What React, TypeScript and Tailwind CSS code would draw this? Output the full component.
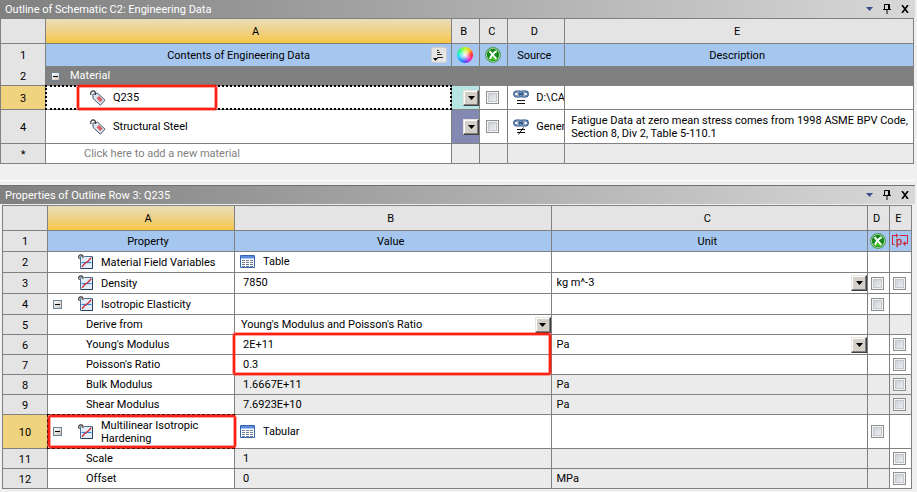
import type { ReactNode } from 'react';
import clsx from 'clsx';

interface PropertyRow {
  name: ReactNode;
  value?: string;
  unit?: string;
  height: string;
  icon?: boolean;
  toggle?: boolean;
  table?: boolean;
  valueSelect?: boolean;
  unitSelect?: boolean;
  // background of the value / unit / D / E cells
  readOnly?: boolean;
  dShaded?: boolean;
  eShaded?: boolean;
  suppress?: boolean;
  parameter?: boolean;
  active?: boolean;
  mark?: 'values' | 'name';
}

const line = 'border-r border-b border-[#808080]';
const redMark = 'pointer-events-none absolute z-10 rounded-[3px] border-2 border-[#fc2015] shadow-[0_0_0_1px_#fc201566,inset_0_0_0_1px_#fc201566]';

const properties: PropertyRow[] = [
  { name: 'Material Field Variables', value: 'Table', height: 'h-[21px]', icon: true, table: true },
  { name: 'Density', value: '7850', unit: 'kg m^-3', height: 'h-[21px]', icon: true, unitSelect: true, suppress: true, parameter: true },
  { name: 'Isotropic Elasticity', height: 'h-[21px]', icon: true, toggle: true, suppress: true },
  { name: 'Derive from', value: "Young's Modulus and Poisson's Ratio", height: 'h-5', valueSelect: true, dShaded: true, eShaded: true },
  { name: "Young's Modulus", value: '2E+11', unit: 'Pa', height: 'h-5', unitSelect: true, parameter: true, mark: 'values' },
  { name: "Poisson's Ratio", value: '0.3', height: 'h-5', parameter: true },
  { name: 'Bulk Modulus', value: '1.6667E+11', unit: 'Pa', height: 'h-5', readOnly: true, dShaded: true, eShaded: true, parameter: true },
  { name: 'Shear Modulus', value: '7.6923E+10', unit: 'Pa', height: 'h-5', readOnly: true, dShaded: true, eShaded: true, parameter: true },
  { name: <>Multilinear Isotropic<br />Hardening</>, value: 'Tabular', height: 'h-[34px]', icon: true, toggle: true, table: true, suppress: true, active: true, mark: 'name' },
  { name: 'Scale', value: '1', height: 'h-5', readOnly: true, dShaded: true, parameter: true },
  { name: 'Offset', value: '0', unit: 'MPa', height: 'h-5', readOnly: true, dShaded: true, parameter: true },
];

function TagIcon() {
  return (
    <svg width="16" height="16" viewBox="0 0 16 16" className="shrink-0" aria-hidden="true">
      <path d="M2.8 4.2 7.6 3.2 15 10.2 10.4 15.2 3.2 8.6Z" fill="#dce6f2" stroke="#43546c" strokeWidth="1" />
      <path d="M6.4 8.2 9 5.8 12.8 9.8 10.2 12.4Z" fill="#e58f95" />
      <path d="M7.2 8.3 9.1 6.6 12 9.7 10.1 11.5Z" fill="#c9303a" />
      <path d="M8 9.4 10.3 7.2M9.2 10.7l2.2-2.2M8 7.2l3.2 3.6" stroke="#f0a9ad" strokeWidth=".5" />
      <path d="M1 5C.2 3.2 1.2.8 3 .8s2.8 1.6 2.4 4" fill="none" stroke="#333" strokeWidth="1.2" />
    </svg>
  );
}

function PropertyIcon() {
  return (
    <svg width="16" height="16" viewBox="0 0 16 16" className="shrink-0" aria-hidden="true">
      <path d="M2.5 2.5h12v12h-12z" fill="#e4edf8" stroke="#4a6a8e" />
      <path d="M14.5 3v11.5H3" fill="none" stroke="#27415f" />
      <path d="M3.5 8.5h10" stroke="#2e8bdc" strokeWidth="1.2" />
      <path d="M4 12.8 6.5 9.8l3.5-2.6 3.2-3.4" fill="none" stroke="#d02a32" strokeWidth="1.3" />
      <path d="M1.5 4.8C0 3 .8.8 2.8.8S5.4 2.2 5 4" fill="none" stroke="#fff" strokeWidth="2.4" />
      <path d="M1.5 4.8C0 3.4.8.8 2.8.8S5.4 2.2 4.8 4.2" fill="none" stroke="#333" strokeWidth="1.2" />
    </svg>
  );
}

function TableIcon() {
  return (
    <svg width="16" height="14" viewBox="0 0 16 14" className="shrink-0" aria-hidden="true">
      <path d="M.5.5h14v12H.5z" fill="#fff" stroke="#3565ad" />
      <path d="M1 1h13v2.5H1z" fill="#5b8be0" />
      <path d="M2 5.5h3m1 0h3m1 0h3M2 7.5h3m1 0h3m1 0h3M2 9.5h3m1 0h3m1 0h3M2 11.5h3m1 0h3m1 0h3" stroke="#6f7f9a" />
    </svg>
  );
}

function LinkIcon({ equal }: { equal?: boolean }) {
  return (
    <svg width="16" height="16" viewBox="0 0 16 16" className="shrink-0" aria-hidden="true">
      <g fill="none">
        <rect x="1" y="1.5" width="8" height="5" rx="2.5" stroke="#234a80" strokeWidth="1.8" />
        <rect x="7" y="1.5" width="8" height="5" rx="2.5" stroke="#234a80" strokeWidth="1.8" />
        <rect x="1" y="1.5" width="8" height="5" rx="2.5" stroke="#a9c6ea" strokeWidth=".5" />
        <rect x="7" y="1.5" width="8" height="5" rx="2.5" stroke="#a9c6ea" strokeWidth=".5" />
        <path d="M4.5 4h7" stroke="#234a80" strokeWidth="1.2" />
        <path d="M4 10.5h8M4 13.5h8" stroke="#111" />
        {!equal && <path d="M10.5 8.5 5.5 15.5" stroke="#111" />}
      </g>
    </svg>
  );
}

function SuppressIcon() {
  return (
    <svg width="16" height="16" viewBox="0 0 16 16" className="mx-auto block" aria-hidden="true">
      <circle cx="8" cy="8" r="7.4" fill="#d5ecd0" stroke="#4c9a58" strokeWidth="1.1" />
      <circle cx="8" cy="8" r="6.2" fill="#168a1a" />
      <path d="M3.2 11.2A6 6 0 0 0 12.8 11.2Q8 8 3.2 11.2Z" fill="#3fc21f" />
      <path d="m4.5 4.2 6.8 7.6M11.7 4.2c-3 1.5-5.2 4.3-6.8 7.6" stroke="#fff" strokeWidth="1.9" fill="none" />
    </svg>
  );
}

function ParameterIcon() {
  return (
    <svg width="16" height="16" viewBox="0 0 16 16" className="mx-auto block" aria-hidden="true">
      <g fill="none" stroke="#cc2430">
        <path d="M2.5 11.5h-2v-9H4M7.5 2.5h8v8H13" />
        <path d="M4 .7 6 2.5 4 4.3M13 8.5l-2 2 2 2Z" fill="#cc2430" strokeWidth=".6" />
      </g>
      <text x="4" y="12" fontSize="11" fill="#cc2430" stroke="#cc2430" strokeWidth=".3" fontFamily="Liberation Sans, sans-serif">p</text>
    </svg>
  );
}

function ColorWheel() {
  return (
    <span className="mx-auto block size-4 rounded-full bg-[radial-gradient(circle,#fff_0%,transparent_60%),conic-gradient(#bf2_0deg,#fb2_45deg,#f22_85deg,#f2b_130deg,#73f_165deg,#27f_200deg,#2df_260deg,#2f7_310deg,#bf2_360deg)]" />
  );
}

function Arrow() {
  return (
    <span className="flex size-4 items-center justify-center border border-t-[#e8e5df] border-r-[#404040] border-b-[#404040] border-l-[#e8e5df] bg-[#d4d0c8] shadow-[inset_-1px_-1px_#808080,inset_1px_1px_#fff]">
      <svg width="7" height="4" viewBox="0 0 7 4" aria-hidden="true">
        <path d="M0 0h7L3.5 4Z" />
      </svg>
    </span>
  );
}

function GridSelect({ label, value }: { label: string; value: string }) {
  return (
    <div className="relative h-4">
      <select aria-label={label} className="block h-4 w-full appearance-none bg-transparent p-0 leading-4 outline-none">
        <option>{value}</option>
      </select>
      <span className="pointer-events-none absolute top-0 right-0">
        <Arrow />
      </span>
    </div>
  );
}

function Check({ label }: { label: string }) {
  return (
    <input
      type="checkbox"
      aria-label={label}
      className="mx-auto block size-[13px] appearance-none border border-[#8e8f8f] bg-linear-to-br from-[#c3c8d0] to-[#f6f6f6] shadow-[inset_0_0_0_1px_#f4f4f4,inset_0_0_0_2px_#c4c7cb]"
    />
  );
}

function Toggle({ label }: { label: string }) {
  return (
    <button type="button" aria-label={label} className="flex size-[9px] shrink-0 items-center justify-center border border-[#6c8296] bg-linear-to-br from-white to-[#c9c6ba]">
      <span className="h-px w-[5px] bg-black" />
    </button>
  );
}

function TitleBar({ title, className }: { title: string; className?: string }) {
  return (
    <header className={clsx('flex items-center justify-between bg-linear-to-r from-[#808080] to-[#d8d8d8] pr-1.5 pl-[5px]', className)}>
      <h2 className="pt-0.5 text-white">{title}</h2>
      <div className="flex items-center gap-2.5">
        <button type="button" aria-label="Menu">
          <svg width="7" height="4" viewBox="0 0 7 4"><path d="M0 0h7L3.5 4Z" fill="#3b4f8f" /></svg>
        </button>
        <button type="button" aria-label="Pin">
          <svg width="8" height="10" viewBox="0 0 8 10" fill="none" stroke="#000">
            <path d="M1.5 5.5v-5h5v5M0 5.5h8M4 6v4M5.5 1v4" />
          </svg>
        </button>
        <button type="button" aria-label="Close">
          <svg width="8" height="8" viewBox="0 0 8 8" stroke="#000" strokeWidth="1.6"><path d="m1 0 6 8M7 0 1 8" /></svg>
        </button>
      </div>
    </header>
  );
}

function RowHead({ children, active }: { children?: ReactNode; active?: boolean }) {
  return <th scope="row" className={clsx(line, 'pt-0.5 font-normal', active ? 'bg-[#efd37f]' : 'bg-[#e4e4e4]')}>{children}</th>;
}

function ColumnLetters({ letters }: { letters: string[] }) {
  return (
    <tr className="h-[25px] bg-[#e4e4e4]">
      <td className={line} />
      {letters.map((letter, i) => (
        <th key={letter} scope="col" className={clsx(line, 'pt-0.5 font-normal', i === 0 ? 'bg-linear-to-b from-[#e9ddba] to-[#f7c640] pl-3.5' : 'pr-1')}>
          {letter}
        </th>
      ))}
    </tr>
  );
}

function MaterialRow({ n, name, source, equal, swatch, description, active, height }: {
  n: string; name: string; source: string; equal?: boolean; swatch: string; description?: ReactNode; active?: boolean; height: string;
}) {
  return (
    <tr className={clsx('bg-white', height)}>
      <RowHead active={active}>{n}</RowHead>
      <td className={clsx(line, 'relative pl-11')}>
        <div className="flex items-center gap-[7px]"><TagIcon />{name}</div>
        {active && (
          <>
            <span className="pointer-events-none absolute -inset-px border-2 border-dotted border-black" />
            <span className={clsx(redMark, '-top-px left-[31px] h-[25px] w-[140px]')} />
          </>
        )}
      </td>
      <td className={clsx(line, swatch)}>
        <button type="button" aria-label={`${name} color`} className="ml-auto block"><Arrow /></button>
      </td>
      <td className={clsx(line, 'pr-0.5')}><Check label={`Suppress ${name}`} /></td>
      <td className={clsx(line, 'overflow-hidden pl-[5px] whitespace-nowrap')}>
        <div className="flex items-center gap-[7px]"><LinkIcon equal={equal} />{source}</div>
      </td>
      <td className={clsx(line, 'pl-1.5 leading-[13px]')}>{description}</td>
    </tr>
  );
}

function Outline() {
  return (
    <section>
      <TitleBar title="Outline of Schematic C2: Engineering Data" className="h-[18px]" />
      <div className="pr-px">
        <table className="w-full table-fixed border-separate border-spacing-0 border-t border-l border-[#808080]">
          <colgroup>
            <col className="w-[45px]" />
            <col />
            <col className="w-7" />
            <col className="w-7" />
            <col className="w-[57px]" />
            <col className="w-[38.2%]" />
          </colgroup>
          <thead>
            <ColumnLetters letters={['A', 'B', 'C', 'D', 'E']} />
            <tr className="h-[22px] bg-[#a5c6ef]">
              <th scope="row" className="border-r border-[#808080] bg-[#e4e4e4] pt-0.5 font-normal">1</th>
              <td className="border-r border-[#808080] pr-1">
                <div className="flex items-center">
                  <span className="flex-1 pt-0.5 text-center">Contents of Engineering Data</span>
                  <button type="button" aria-label="Sort" className="flex size-4 items-center justify-center rounded-[2px] border border-[#cfcfcf] bg-[#e6e6e6]">
                    <svg width="14" height="14" viewBox="0 0 14 14" fill="none">
                      <path d="M5 2.5h2M5 4.5h3M5 6.5h5M5 9.5h6" stroke="#33291f" />
                      <path d="M1 10h5L3.5 13Z" fill="#000" />
                    </svg>
                  </button>
                </div>
              </td>
              <td className="border-r border-[#808080] pr-0.5"><ColorWheel /></td>
              <td className="border-r border-[#808080] pr-0.5"><SuppressIcon /></td>
              <td className="border-r border-[#808080] pt-0.5 pr-1 text-center">Source</td>
              <td className="border-r border-[#808080] pt-0.5 pr-1 text-center">Description</td>
            </tr>
          </thead>
          <tbody>
            <tr className="h-5 bg-[#808080] text-white">
              <th scope="row" className={clsx(line, 'bg-[#e4e4e4] pt-0.5 font-normal text-black')}>2</th>
              <td colSpan={5} className="pl-[5px]">
                <div className="flex items-center gap-2.5"><Toggle label="Collapse Material" />Material</div>
              </td>
            </tr>
            <MaterialRow n="3" name="Q235" source="D:\CA" equal swatch="bg-[#b7e5e3]" active height="h-6" />
            <MaterialRow
              n="4"
              name="Structural Steel"
              source="Gener"
              swatch="bg-[#8389b3]"
              height="h-[34px]"
              description={<>Fatigue Data at zero mean stress comes from 1998 ASME BPV Code,<br />Section 8, Div 2, Table 5-110.1</>}
            />
            <tr className="h-5 bg-[#ebebeb]">
              <RowHead>*</RowHead>
              <td className={clsx(line, 'bg-white pl-[38px] text-[#808080]')}>Click here to add a new material</td>
              <td className={line} />
              <td className={line} />
              <td className={line} />
              <td className={line} />
            </tr>
          </tbody>
        </table>
      </div>
    </section>
  );
}

function Property({ row, n }: { row: PropertyRow; n: number }) {
  const label = typeof row.name === 'string' ? row.name : 'Multilinear Isotropic Hardening';
  const shade = row.readOnly && 'bg-[#ebebeb]';
  return (
    <tr className={clsx('bg-white', row.height)}>
      <RowHead active={row.active}>{n}</RowHead>
      <td className={clsx(line, 'relative', row.icon ? 'pl-[5px]' : 'pl-[38px]')}>
        {row.icon ? (
          <div className="flex items-center leading-[13px]">
            <span className="flex w-[25px] shrink-0">{row.toggle && <Toggle label={`Collapse ${label}`} />}</span>
            <PropertyIcon />
            <span className="pl-[7px]">{row.name}</span>
          </div>
        ) : row.name}
        {row.mark === 'name' && (
          <>
            <span className="pointer-events-none absolute -inset-px border border-dashed border-black" />
            <span className={clsx(redMark, 'inset-y-0 -right-0.5 left-0')} />
          </>
        )}
      </td>
      <td className={clsx(line, shade, row.mark === 'values' && 'relative', row.table ? 'pl-[5px]' : row.valueSelect ? 'pl-1.5' : 'pl-2')}>
        {row.table && <div className="flex items-center gap-[7px]"><TableIcon />{row.value}</div>}
        {row.valueSelect && <GridSelect label={label} value={row.value ?? ''} />}
        {!row.table && !row.valueSelect && row.value}
        {row.mark === 'values' && (
          <span className={clsx(redMark, '-top-0.5 right-0 -left-0.5 h-[42px]')} />
        )}
      </td>
      <td className={clsx(line, shade, 'pl-[5px]')}>
        {row.unitSelect ? <GridSelect label={`${label} unit`} value={row.unit ?? ''} /> : row.unit}
      </td>
      <td className={clsx(line, row.dShaded && 'bg-[#ebebeb]', 'pr-0.5')}>{row.suppress && <Check label={`Suppress ${label}`} />}</td>
      <td className={clsx(line, row.eShaded && 'bg-[#ebebeb]', 'pr-0.5')}>{row.parameter && <Check label={`Parameterize ${label}`} />}</td>
    </tr>
  );
}

function Properties() {
  return (
    <section>
      <TitleBar title="Properties of Outline Row 3: Q235" className="h-[19px] border-t border-[#707070]" />
      <div className="pt-px pr-[3px] pl-0.5">
        <table className="w-full table-fixed border-separate border-spacing-0 border-t border-l border-[#808080]">
          <colgroup>
            <col className="w-[45px]" />
            <col className="w-[187px]" />
            <col />
            <col />
            <col className="w-[22px]" />
            <col className="w-[22px]" />
          </colgroup>
          <thead>
            <ColumnLetters letters={['A', 'B', 'C', 'D', 'E']} />
            <tr className="h-[21px] bg-[#a5c6ef]">
              <RowHead>1</RowHead>
              <td className={clsx(line, 'pt-0.5 pl-3.5 text-center')}>Property</td>
              <td className={clsx(line, 'pt-0.5 pr-1 text-center')}>Value</td>
              <td className={clsx(line, 'pt-0.5 pr-1 text-center')}>Unit</td>
              <td className={clsx(line, 'pr-0.5')}><SuppressIcon /></td>
              <td className={clsx(line, 'pr-0.5')}><ParameterIcon /></td>
            </tr>
          </thead>
          <tbody>
            {properties.map((row, i) => <Property key={i} row={row} n={i + 2} />)}
          </tbody>
        </table>
      </div>
    </section>
  );
}

export default function App() {
  return (
    <div className="min-h-screen bg-[#f0f0f0] font-[Roboto,sans-serif] text-[11px] leading-4 text-black">
      <main className="mr-0.5">
        <Outline />
        <div className="mt-4 mb-1 h-px bg-white" />
        <Properties />
      </main>
    </div>
  );
}
